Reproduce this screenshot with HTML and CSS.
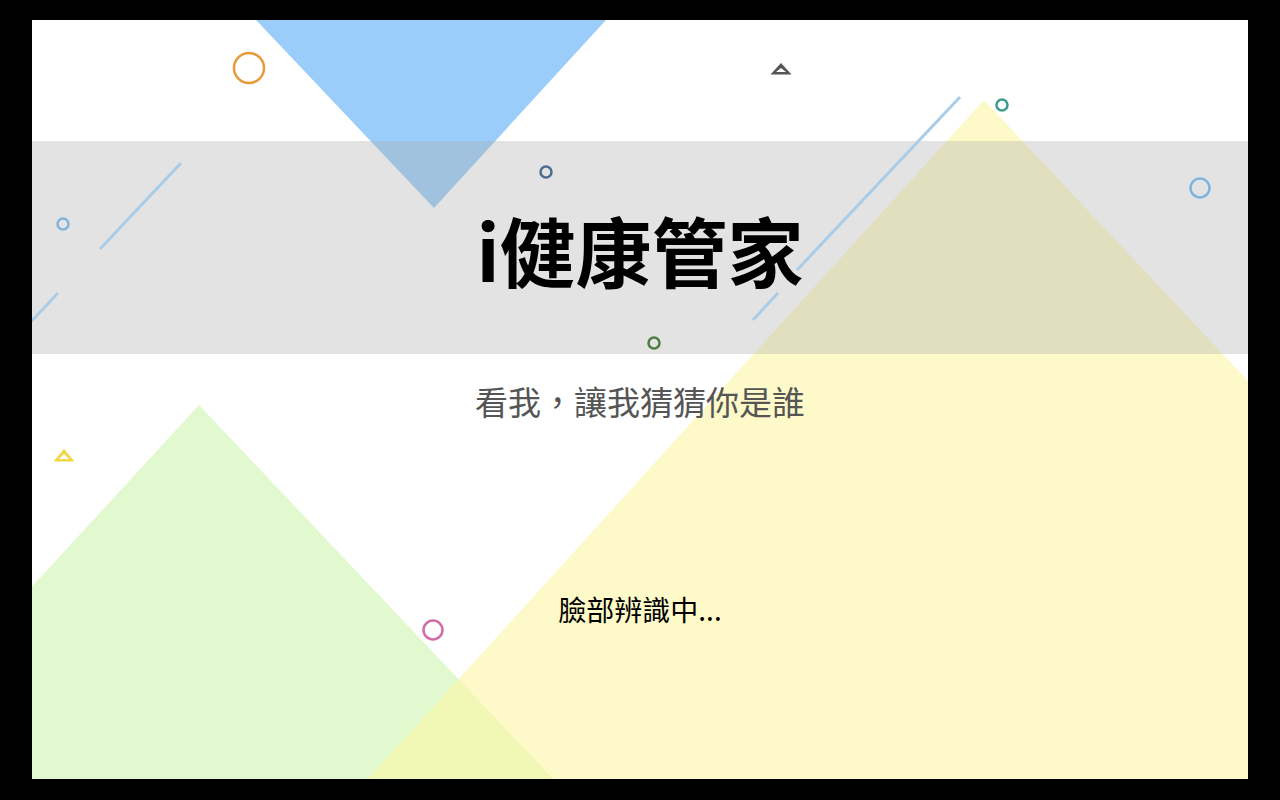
FILE: index.html
```html
<!DOCTYPE html>
<html lang="zh-Hant">
<head>
<meta charset="utf-8">
<title>i健康管家</title>
<link rel="stylesheet" href="styles.css">
</head>
<body>
<main class="screen">
  <svg class="deco deco-back" viewBox="0 0 1216 759" width="1216" height="759" aria-hidden="true">
    <polygon points="224,0 574,0 402,188" fill="#9acdf9"/>
    <polygon points="167,385 -177,759 521,759" fill="#e2f9d0"/>
    <polygon points="952,80 336,759 1590,759" fill="rgba(252,245,160,0.58)"/>
  </svg>
  <section class="band">
    <h1 class="title">i健康管家</h1>
  </section>
  <svg class="deco deco-front" viewBox="0 0 1216 759" width="1216" height="759" aria-hidden="true">
    <g fill="none" stroke-width="2.5">
      <circle cx="217" cy="48" r="15" stroke="#e8993c"/>
      <circle cx="514" cy="152" r="5.5" stroke="#4d6d8e"/>
      <circle cx="970" cy="85" r="5.5" stroke="#3a9d8c"/>
      <circle cx="1168" cy="168" r="9.5" stroke="#7fb5dd"/>
      <circle cx="31" cy="204" r="5.5" stroke="#7fb5dd"/>
      <circle cx="622" cy="323" r="5.5" stroke="#4f7d3f"/>
      <circle cx="401" cy="610" r="9.5" stroke="#d26ba8"/>
    </g>
    <g stroke="#a9cde8" stroke-width="3" stroke-linecap="butt">
      <line x1="928" y1="77" x2="765" y2="250"/>
      <line x1="746" y1="273" x2="721" y2="300"/>
      <line x1="149" y1="143" x2="68" y2="229"/>
      <line x1="26" y1="273" x2="-5" y2="306"/>
    </g>
    <path d="M749 43 L738.5 54.5 L759.5 54.5 Z M749 48 L744 52 L754 52 Z" fill="#555555" fill-rule="evenodd"/>
    <path d="M32 429 L21.5 441.5 L42.5 441.5 Z M32 434 L27 439 L37 439 Z" fill="#f2d548" fill-rule="evenodd"/>
  </svg>
  <p class="subtitle">看我，讓我猜猜你是誰</p>
  <p class="status">臉部辨識中...</p>
</main>
</body>
</html>
```
FILE: styles.css
```css
html, body {
  margin: 0;
  padding: 0;
  background: #000;
}
body {
  padding: 20px 32px 21px;
  width: 1216px;
  height: 759px;
  font-family: "Noto Sans CJK TC", "Noto Sans", sans-serif;
}
.screen {
  position: relative;
  width: 1216px;
  height: 759px;
  background: #fff;
  overflow: hidden;
  display: flex;
  flex-direction: column;
  align-items: center;
}
.deco {
  position: absolute;
  left: 0;
  top: 0;
  display: block;
}
.deco-back { z-index: 0; }
.deco-front { z-index: 2; }
.band {
  position: relative;
  z-index: 1;
  margin-top: 121px;
  width: 100%;
  height: 213px;
  background: rgba(172, 172, 172, 0.34);
  display: flex;
  align-items: center;
  justify-content: center;
}
.title {
  position: relative;
  z-index: 3;
  margin: 4px 0 0;
  font-size: 76px;
  font-weight: 700;
  line-height: 1.2;
  color: #000;
  letter-spacing: 0;
}
.subtitle {
  position: relative;
  z-index: 3;
  margin: 27px 0 0;
  font-size: 33px;
  line-height: 40px;
  color: #555;
}
.status {
  position: relative;
  z-index: 3;
  margin: 170px 0 0;
  font-size: 28px;
  line-height: 36px;
  color: #000;
}
```
